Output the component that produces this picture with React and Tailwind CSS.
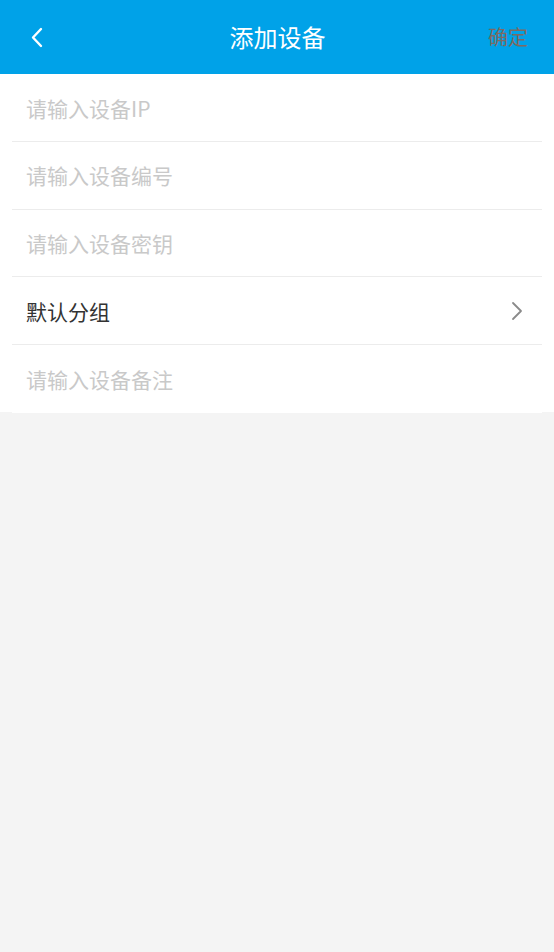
import React from "react";

const rows = [
  { label: "请输入设备IP", placeholder: true },
  { label: "请输入设备编号", placeholder: true },
  { label: "请输入设备密钥", placeholder: true },
  { label: "默认分组", placeholder: false, arrow: true },
  { label: "请输入设备备注", placeholder: true },
];

const App = () => {
  return (
    <div
      className="w-full min-h-screen bg-[#f4f4f4] flex flex-col"
      style={{ fontFamily: '"Noto Sans CJK SC", "Noto Sans", sans-serif' }}
    >
      {/* header */}
      <div className="h-[74px] bg-[#00a2e8] grid grid-cols-[1fr_auto_1fr] items-center pl-[28px] pr-[26px]">
        <svg width="18" height="24" viewBox="0 0 18 24" fill="none" className="mt-[2px]">
          <path d="M13 3 L5 11.5 L13 20" stroke="#fff" strokeWidth="2.4" strokeLinecap="round" strokeLinejoin="round" />
        </svg>
        <span className="text-white text-[24px] -ml-[1px]">添加设备</span>
        <span className="text-[#7d6a62] text-[20px] justify-self-end">确定</span>
      </div>

      {/* form */}
      <div className="bg-white h-[338px]">
        {rows.map((row, i) => (
          <div
            key={i}
            className={
              "mx-3 h-[67.75px] flex items-center justify-between pl-[14px] pr-[18px] border-b " +
              (i === rows.length - 1 ? "border-white" : "border-[#ececec]")
            }
          >
            <span
              className={
                "text-[21px] mt-[2px] " + (row.placeholder ? "text-[#c9c9c9]" : "text-[#333]")
              }
            >
              {row.label}
            </span>
            {row.arrow && (
              <svg width="14" height="22" viewBox="0 0 14 22" fill="none">
                <path d="M3 3 L11 11 L3 19" stroke="#8a8a8a" strokeWidth="1.8" strokeLinecap="round" strokeLinejoin="round" />
              </svg>
            )}
          </div>
        ))}
      </div>
    </div>
  );
};

export default App;
